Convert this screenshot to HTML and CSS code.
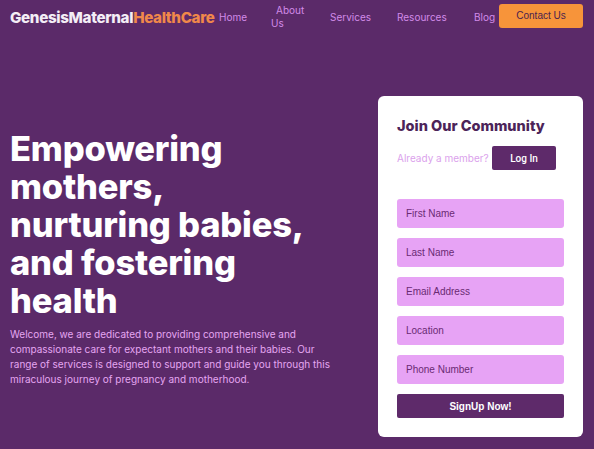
FILE: index.html
```html
<!DOCTYPE html>
<html lang="en">
<head>
<meta charset="utf-8">
<title>Genesis Maternal HealthCare</title>
<link rel="stylesheet" href="styles.css">
</head>
<body>
<header class="topbar">
  <a class="logo" href="#">GenesisMaternal<span class="logo-accent">HealthCare</span></a>
  <nav class="nav">
    <a class="nav-link nav-home" href="#">Home</a>
    <a class="nav-link nav-about" href="#">About Us</a>
    <a class="nav-link nav-services" href="#">Services</a>
    <a class="nav-link nav-resources" href="#">Resources</a>
    <a class="nav-link" href="#">Blog</a>
    <a class="contact-btn" href="#">Contact Us</a>
  </nav>
</header>
<main class="hero">
  <section class="hero-text">
    <h1 class="hero-title">Empowering<br>mothers,<br>nurturing babies,<br>and fostering<br>health</h1>
    <p class="hero-desc">Welcome, we are dedicated to providing comprehensive and compassionate care for expectant mothers and their babies. Our range of services is designed to support and guide you through this miraculous journey of pregnancy and motherhood.</p>
  </section>
  <aside class="card">
    <h2 class="card-title">Join Our Community</h2>
    <div class="member-row">
      <span class="member-text">Already a member?</span>
      <button class="login-btn" type="button">Log In</button>
    </div>
    <form class="signup-form">
      <input class="field" type="text" placeholder="First Name">
      <input class="field" type="text" placeholder="Last Name">
      <input class="field" type="email" placeholder="Email Address">
      <input class="field" type="text" placeholder="Location">
      <input class="field" type="tel" placeholder="Phone Number">
      <button class="signup-btn" type="button">SignUp Now!</button>
    </form>
  </aside>
</main>
</body>
</html>
```
FILE: styles.css
```css
* { box-sizing: border-box; }
html, body { margin: 0; padding: 0; }
body {
  background: #5b2a69;
  width: 594px;
  height: 449px;
  overflow: hidden;
  font-family: "Inter", "Liberation Sans", sans-serif;
}
.topbar {
  display: flex;
  align-items: flex-start;
  padding: 4px 11px 0 10px;
  height: 40px;
}
.logo {
  font-weight: 800;
  font-size: 15.2px;
  color: #f4eef6;
  text-decoration: none;
  letter-spacing: -0.35px;
  margin-top: 4px;
  white-space: nowrap;
  width: 203px;
}
.logo-accent { color: #f0884a; }
.nav {
  display: flex;
  align-items: flex-start;
  margin-left: 6px;
  flex: 1;
}
.nav-link {
  color: #d28be8;
  font-size: 10px;
  text-decoration: none;
  margin-top: 7px;
  white-space: nowrap;
}
.nav-home { width: 52px; }
.nav-about {
  white-space: normal;
  width: 36px;
  margin-top: 0;
  margin-right: 23px;
  line-height: 13px;
  text-indent: 5px;
}
.nav-services { width: 67px; }
.nav-resources { width: 77px; }
.contact-btn {
  margin-left: auto;
  flex: none;
  background: #f7943a;
  color: #4a1f4f;
  font-family: "Liberation Sans", Arial, sans-serif;
  font-size: 10px;
  text-decoration: none;
  width: 84px;
  height: 24px;
  line-height: 24px;
  text-align: center;
  border-radius: 3px;
}
.hero {
  display: flex;
  justify-content: space-between;
  padding: 56px 11px 0 10px;
}
.hero-text {
  width: 340px;
  padding-top: 34px;
}
.hero-title {
  margin: 0;
  color: #ffffff;
  font-size: 34.5px;
  font-weight: 800;
  line-height: 38px;
  letter-spacing: -0.2px;
}
.hero-desc {
  margin: 7px 0 0 0;
  color: #e5a6f1;
  font-size: 10px;
  line-height: 15px;
  width: 330px;
}
.card {
  width: 205px;
  height: 341px;
  background: #ffffff;
  border-radius: 6px;
  padding: 19px 19px 0 19px;
}
.card-title {
  margin: 0;
  color: #4c2459;
  font-size: 14.5px;
  font-weight: 800;
  line-height: 22px;
}
.member-row {
  display: flex;
  align-items: center;
  margin-top: 9px;
}
.member-text {
  color: #dba2ec;
  font-size: 10px;
  width: 95px;
  white-space: nowrap;
}
.login-btn {
  width: 64px;
  height: 24px;
  background: #5e2a6a;
  color: #ffffff;
  border: none;
  border-radius: 2px;
  font-family: "Roboto", sans-serif;
  font-weight: 500;
  font-size: 10px;
  padding: 0;
}
.signup-form {
  display: flex;
  flex-direction: column;
  gap: 10px;
  margin-top: 29px;
}
.field {
  width: 167px;
  height: 29px;
  border: none;
  border-radius: 3px;
  background: #e7a3f5;
  padding: 0 9px;
  font-family: "Liberation Sans", Arial, sans-serif;
  font-size: 10px;
  color: #6a2a73;
  outline: none;
}
.field::placeholder { color: #6a2a73; }
.signup-btn {
  width: 167px;
  height: 24px;
  border: none;
  border-radius: 2px;
  background: #5e2a6a;
  color: #ffffff;
  font-family: "Liberation Sans", Arial, sans-serif;
  font-weight: 700;
  font-size: 10px;
  padding: 0;
}
```
